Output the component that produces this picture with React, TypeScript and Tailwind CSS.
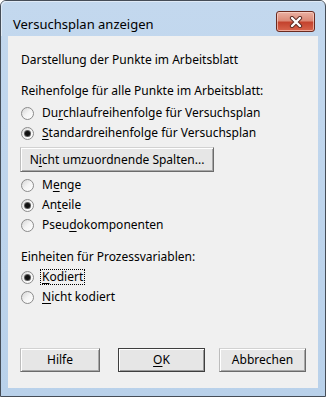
import React from 'react';

const font = { fontFamily: '"Noto Sans", "Segoe UI", Arial, sans-serif' };

function U({ children }: { children: React.ReactNode }) {
  return <span className="underline underline-offset-2 decoration-1">{children}</span>;
}

function Radio({ checked, children, focus }: { checked?: boolean; children: React.ReactNode; focus?: boolean }) {
  return (
    <div className="flex h-[20px] items-center pl-[13px]">
      <span className="flex h-[13px] w-[13px] items-center justify-center rounded-full border border-[#8b8b8b] bg-gradient-to-br from-[#d6d6d6] via-[#f4f4f4] to-white">
        {checked && <span className="h-[5px] w-[5px] rounded-full bg-[#111] shadow-[0_0_0_1px_#5a5a5a]" />}
      </span>
      <span className={focus ? 'ml-[6px] border border-dotted border-black px-px leading-[14px]' : 'ml-[8px]'}>{children}</span>
    </div>
  );
}

function Btn({ children, w, primary }: { children: React.ReactNode; w: string; primary?: boolean }) {
  return (
    <button
      className={
        'flex h-[24px] items-center justify-center bg-[#e6e6e6] text-black ' +
        w +
        (primary
          ? ' border border-[#3f3f3f] shadow-[inset_1px_1px_0_#fff,inset_-1px_-1px_0_#9a9a9a]'
          : ' border border-t-[#d2d2d2] border-l-[#bdbdbd] border-r-[#6b6b6b] border-b-[#6b6b6b] shadow-[inset_1px_1px_0_#fff,inset_-1px_-1px_0_#a8a8a8]')
      }
    >
      {children}
    </button>
  );
}

export default function App() {
  return (
    <div
      style={font}
      className="flex h-[397px] w-[326px] flex-col rounded-t-[6px] border border-[#454d57] bg-gradient-to-b from-[#c3d8ee] to-[#b9d1ea] text-[12px] text-black"
    >
      <div className="flex h-[35px] shrink-0 items-start justify-between rounded-t-[5px] shadow-[inset_1px_1px_0_#dfeaf6]">
        <span className="pl-[12px] pt-[13px] text-[13px] leading-[20px] text-black">Versuchsplan anzeigen</span>
        <div className="mr-[10px] mt-[10px] flex h-[21px] w-[39px] items-center justify-center rounded-[3px] border border-[#6b2a1f] bg-[linear-gradient(#eab1a3_0%,#dc8a77_45%,#c4432e_55%,#d8654d_100%)] shadow-[inset_0_0_0_1px_rgba(255,220,210,0.6)]">
          <svg width="14" height="12" viewBox="0 0 14 12">
            <path d="M3 2 L11 10 M11 2 L3 10" stroke="#5b2a22" strokeWidth="4.2" strokeLinecap="round" />
            <path d="M3 2 L11 10 M11 2 L3 10" stroke="#fff" strokeWidth="2.4" strokeLinecap="round" />
          </svg>
        </div>
      </div>

      <div className="mx-[7px] mb-[8px] flex flex-1 flex-col bg-[#f0f0f0] leading-[16px]">
        <p className="pl-[13px] pt-[16px]">Darstellung der Punkte im Arbeitsblatt</p>
        <p className="mt-[15px] pl-[13px]">Reihenfolge für alle Punkte im Arbeitsblatt:</p>
        <div className="mt-[4px]">
          <Radio>
            Du<U>r</U>chlaufreihenfolge für Versuchsplan
          </Radio>
          <Radio checked>
            <U>S</U>tandardreihenfolge für Versuchsplan
          </Radio>
        </div>
        <div className="mt-[4px] pl-[12px]">
          <Btn w="w-[194px] h-[25px]">
            N<U>i</U>cht umzuordnende Spalten...
          </Btn>
        </div>
        <div className="mt-[3px]">
          <Radio>
            M<U>e</U>nge
          </Radio>
          <Radio checked>
            An<U>t</U>eile
          </Radio>
          <Radio>
            Pseu<U>d</U>okomponenten
          </Radio>
        </div>
        <p className="mt-[14px] pl-[13px]">Einheiten für Prozessvariablen:</p>
        <div className="mt-[2px]">
          <Radio checked focus>
            <U>K</U>odiert
          </Radio>
          <Radio>
            <U>N</U>icht kodiert
          </Radio>
        </div>
        <div className="mt-auto mb-[16px] flex pl-[12px]">
          <Btn w="w-[80px]">Hilfe</Btn>
          <div className="ml-[18px]">
            <Btn w="w-[87px]" primary>
              <U>O</U>K
            </Btn>
          </div>
          <div className="ml-[14px]">
            <Btn w="w-[87px]">Abbrechen</Btn>
          </div>
        </div>
      </div>
    </div>
  );
}
